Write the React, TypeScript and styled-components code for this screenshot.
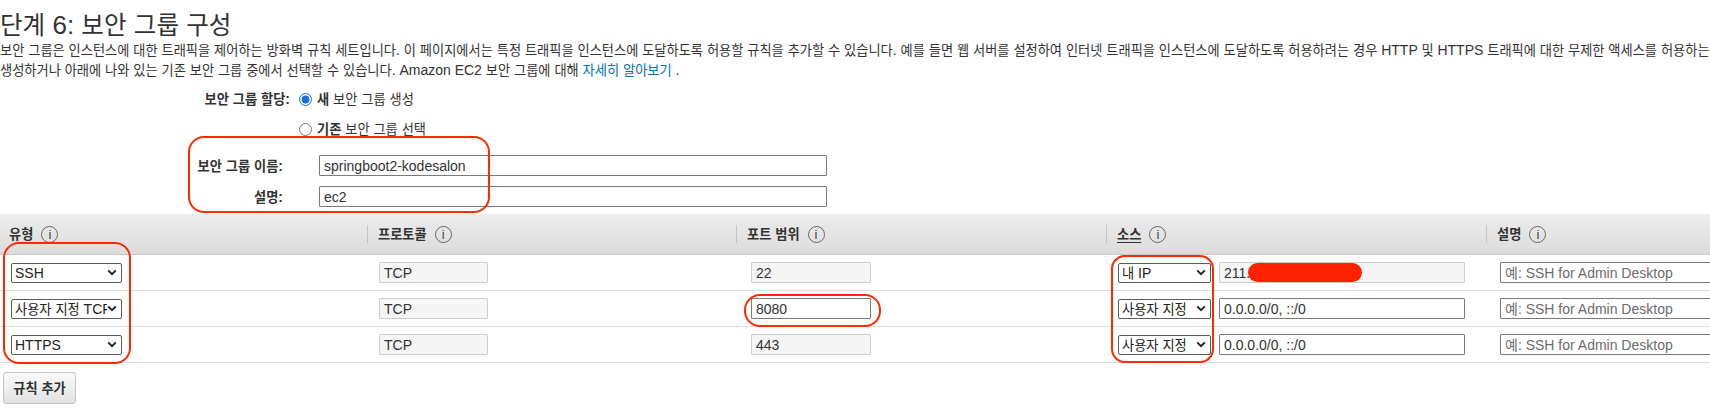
import React from 'react'
import styled, { createGlobalStyle } from 'styled-components'

const GlobalStyle = createGlobalStyle`
    html, body {
        margin: 0;
        padding: 0;
        background: #fff;
        overflow: hidden;
    }
    body {
        font-family: "Liberation Sans", "Noto Sans CJK KR", sans-serif;
        font-size: 14px;
        color: #333;
    }
`

// Hangul in the reference is a little narrower than Noto's glyphs
const HANGUL = /([\u1100-\u11FF\u3130-\u318F\uAC00-\uD7AF]+)/

const Hangul = styled.span`
    font-size: 0.945em;
    line-height: 1;
`

const K = ({ children }: { children: string }) => (
    <>
        {children.split(HANGUL).map((part, i) =>
            i % 2 === 1 ? <Hangul key={i}>{part}</Hangul> : part
        )}
    </>
)

const Page = styled.div`
    position: relative;
    width: 1760px;
`

const Title = styled.h1`
    margin: 0;
    padding-top: 11px;
    height: 29px;
    font-size: 26px;
    line-height: 29px;
    font-weight: 400;
    color: #333;
    white-space: nowrap;
`

const Intro = styled.p`
    margin: 0;
    height: 20px;
    line-height: 20px;
    white-space: nowrap;
`

const MoreLink = styled.a`
    color: #0073bb;
    text-decoration: none;
`

const AssignGroup = styled.div`
    display: grid;
    grid-template-columns: 290px auto;
    grid-auto-rows: 20px;
    column-gap: 9px;
    row-gap: 10px;
    padding-top: 9px;
`

const FieldGroup = styled.div`
    display: grid;
    grid-template-columns: 283px 508px;
    grid-auto-rows: 21px;
    column-gap: 36px;
    row-gap: 10px;
    margin-top: 16px;
    align-items: center;
`

const FormLabel = styled.div`
    height: 20px;
    text-align: right;
    font-weight: 700;
    line-height: 20px;
    color: #333;
    white-space: nowrap;
`

const RadioLabel = styled.label`
    display: flex;
    align-items: center;
    gap: 5px;
    height: 20px;
    white-space: nowrap;
`

const Radio = styled.input`
    margin: 0;
    width: 13px;
    height: 13px;
    accent-color: #1a6fe0;
`

const Strong = styled.b`
    font-weight: 700;
`

const Field = styled.input<{ $w: number; $locked?: boolean }>`
    box-sizing: border-box;
    width: ${p => p.$w}px;
    height: 21px;
    padding: 0 4px;
    font-family: inherit;
    font-size: 14px;
    color: #333;
    border: 1px solid ${p => (p.$locked ? '#cdcdcd' : '#7a7a7a')};
    background: ${p => (p.$locked ? '#f5f5f5' : '#fff')};
    border-radius: 1px;
    outline: none;

    &::placeholder {
        color: #6c6c6c;
    }
`

const Table = styled.div`
    margin-top: 7px;
`

const HeadRow = styled.div`
    display: grid;
    grid-template-columns: 367px 369px 370px 380px 1fr;
    height: 40px;
    border-bottom: 1px solid #c9c9c9;
    background: linear-gradient(#ededed, #dcdcdc);
`

const HeadCell = styled.div<{ $first?: boolean }>`
    position: relative;
    display: flex;
    align-items: center;
    gap: 8px;
    padding-left: ${p => (p.$first ? 9 : 11)}px;
    font-weight: 700;
    color: #333;
    white-space: nowrap;

    &::before {
        content: '';
        display: ${p => (p.$first ? 'none' : 'block')};
        position: absolute;
        left: 0;
        top: 11px;
        width: 1px;
        height: 18px;
        background: #c4c4c4;
    }
`

const HeadText = styled.span<{ $underline?: boolean }>`
    text-decoration: ${p => (p.$underline ? 'underline' : 'none')};
    text-underline-offset: 3px;
`

const InfoIcon = styled.span`
    box-sizing: border-box;
    display: inline-flex;
    align-items: center;
    justify-content: center;
    width: 17px;
    height: 17px;
    border: 1px solid #666;
    border-radius: 50%;
    font-size: 13px;
    font-weight: 400;
    color: #444;
`

const BodyRow = styled.div`
    display: grid;
    grid-template-columns: 367px 369px 370px 380px 1fr;
    height: 35px;
    border-bottom: 1px solid #dedede;
    align-items: center;
`

const Cell = styled.div<{ $inset: number }>`
    display: flex;
    align-items: center;
    gap: 8px;
    padding-left: ${p => p.$inset}px;
`

const SelectBox = styled.div<{ $w: number }>`
    box-sizing: border-box;
    display: flex;
    align-items: center;
    width: ${p => p.$w}px;
    height: 20px;
    padding: 0 4px 0 3px;
    border: 1px solid #5c5c5c;
    border-radius: 2px;
    background: #fff;
    color: #222;
`

const SelectText = styled.span`
    flex: 1;
    overflow: hidden;
    white-space: nowrap;
    line-height: 18px;
`

const Masked = styled.div`
    position: relative;
`

const Redaction = styled.span`
    position: absolute;
    left: 29px;
    top: 1px;
    width: 114px;
    height: 19px;
    border-radius: 10px;
    background: #ff2200;
`

const AddButton = styled.button`
    display: block;
    margin: 9px 0 0 3px;
    width: 73px;
    height: 32px;
    padding: 0;
    font-family: inherit;
    font-size: 14px;
    font-weight: 700;
    color: #333;
    border: 1px solid #c4c4c4;
    border-radius: 3px;
    background: linear-gradient(#fbfbfb, #e2e2e2);
`

const Highlight = styled.div<{ $x: number; $y: number; $w: number; $h: number; $r: number }>`
    position: absolute;
    box-sizing: border-box;
    left: ${p => p.$x}px;
    top: ${p => p.$y}px;
    width: ${p => p.$w}px;
    height: ${p => p.$h}px;
    border: 2px solid #ff2a00;
    border-radius: ${p => p.$r}px;
    pointer-events: none;
`

const Chevron = () => (
    <svg width="10" height="7" viewBox="0 0 10 7">
        <path d="M1.2 1.4 L5 5.2 L8.8 1.4" fill="none" stroke="#222" strokeWidth="1.9" />
    </svg>
)

const Select = ({ w, children }: { w: number; children: string }) => (
    <SelectBox $w={w}>
        <SelectText><K>{children}</K></SelectText>
        <Chevron />
    </SelectBox>
)

const Head = ({ label, first, underline }: { label: string; first?: boolean; underline?: boolean }) => (
    <HeadCell $first={first}>
        <HeadText $underline={underline}><K>{label}</K></HeadText>
        <InfoIcon>i</InfoIcon>
    </HeadCell>
)

const PLACEHOLDER = '예: SSH for Admin Desktop'

type Rule = { type: string; port: string; portLocked: boolean; source: string; cidr: string; cidrLocked: boolean }

const rules: Rule[] = [
    { type: 'SSH', port: '22', portLocked: true, source: '내 IP', cidr: '211.', cidrLocked: true },
    { type: '사용자 지정 TCP 규칙', port: '8080', portLocked: false, source: '사용자 지정', cidr: '0.0.0.0/0, ::/0', cidrLocked: false },
    { type: 'HTTPS', port: '443', portLocked: true, source: '사용자 지정', cidr: '0.0.0.0/0, ::/0', cidrLocked: false },
]

export default function App() {
    return (
        <Page>
            <GlobalStyle />
            <Title><K>단계 6: 보안 그룹 구성</K></Title>
            <Intro>
                <K>보안 그룹은 인스턴스에 대한 트래픽을 제어하는 방화벽 규칙 세트입니다. 이 페이지에서는 특정 트래픽을 인스턴스에 도달하도록 허용할 규칙을 추가할 수 있습니다. 예를 들면 웹 서버를 설정하여 인터넷 트래픽을 인스턴스에 도달하도록 허용하려는 경우 HTTP 및 HTTPS 트래픽에 대한 무제한 액세스를 허용하는 규칙을 추가합니다. 새 보안 그룹을</K>
            </Intro>
            <Intro>
                <K>생성하거나 아래에 나와 있는 기존 보안 그룹 중에서 선택할 수 있습니다. Amazon EC2 보안 그룹에 대해 </K>
                <MoreLink href="#"><K>자세히 알아보기</K></MoreLink> .
            </Intro>

            <AssignGroup>
                <FormLabel><K>보안 그룹 할당:</K></FormLabel>
                <RadioLabel>
                    <Radio type="radio" name="sg" defaultChecked />
                    <span><Strong><K>새</K></Strong><K> 보안 그룹 생성</K></span>
                </RadioLabel>
                <div />
                <RadioLabel>
                    <Radio type="radio" name="sg" />
                    <span><Strong><K>기존</K></Strong><K> 보안 그룹 선택</K></span>
                </RadioLabel>
            </AssignGroup>

            <FieldGroup>
                <FormLabel><K>보안 그룹 이름:</K></FormLabel>
                <Field $w={508} defaultValue="springboot2-kodesalon" />
                <FormLabel><K>설명:</K></FormLabel>
                <Field $w={508} defaultValue="ec2" />
            </FieldGroup>

            <Table>
                <HeadRow>
                    <Head label="유형" first />
                    <Head label="프로토콜" />
                    <Head label="포트 범위" />
                    <Head label="소스" underline />
                    <Head label="설명" />
                </HeadRow>
                {rules.map((r, i) => (
                    <BodyRow key={i}>
                        <Cell $inset={11}><Select w={111}>{r.type}</Select></Cell>
                        <Cell $inset={12}><Field $w={109} $locked readOnly value="TCP" /></Cell>
                        <Cell $inset={15}><Field $w={120} $locked={r.portLocked} readOnly value={r.port} /></Cell>
                        <Cell $inset={12}>
                            <Select w={93}>{r.source}</Select>
                            {i === 0 ? (
                                <Masked>
                                    <Field $w={246} $locked readOnly value={r.cidr} />
                                    <Redaction />
                                </Masked>
                            ) : (
                                <Field $w={246} $locked={r.cidrLocked} readOnly value={r.cidr} />
                            )}
                        </Cell>
                        <Cell $inset={14}><Field $w={246} placeholder={PLACEHOLDER} /></Cell>
                    </BodyRow>
                ))}
            </Table>

            <AddButton><K>규칙 추가</K></AddButton>

            <Highlight $x={188} $y={136} $w={302} $h={77} $r={16} />
            <Highlight $x={3} $y={242} $w={128} $h={122} $r={16} />
            <Highlight $x={744} $y={294} $w={137} $h={33} $r={16} />
            <Highlight $x={1111} $y={255} $w={103} $h={108} $r={14} />
        </Page>
    )
}
